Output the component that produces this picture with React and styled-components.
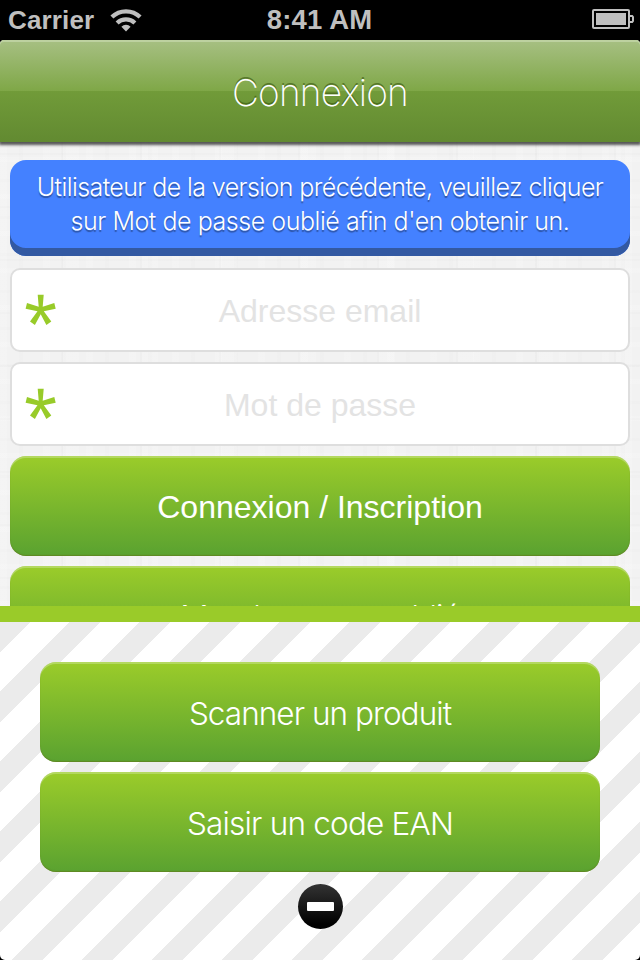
import React from "react";
import styled, { createGlobalStyle } from "styled-components";

const GlobalStyle = createGlobalStyle`
  html, body { margin: 0; padding: 0; background: #000; }
  * { box-sizing: border-box; }
`;

const Screen = styled.div`
  width: 640px;
  height: 960px;
  display: flex;
  flex-direction: column;
  background: #000;
  overflow: hidden;
  font-family: Inter, "Liberation Sans", sans-serif;
`;

const StatusBar = styled.div`
  flex: none;
  height: 40px;
  padding: 0 6px 0 8px;
  display: grid;
  grid-template-columns: 1fr auto 1fr;
  align-items: center;
  color: #bfbfbf;
  font: bold 26px/40px "Liberation Sans", sans-serif;
`;

const Carrier = styled.div`
  display: flex;
  align-items: center;
  gap: 16px;
  letter-spacing: 0.15px;
`;

const Clock = styled.div`
  font-size: 27.5px;
  line-height: 38px;
  letter-spacing: 0.15px;
  padding-right: 3px;
`;

const BatterySlot = styled.div`
  display: flex;
  justify-content: flex-end;
  margin-top: -2px;
`;

const Page = styled.main`
  flex: none;
  height: 566px;
  overflow: hidden;
  display: flex;
  flex-direction: column;
  border-radius: 4px 4px 0 0;
  background-color: #f2f2f2;
  background-image:
    repeating-linear-gradient(90deg, rgba(255,255,255,.14) 0 7px, transparent 7px 19px, rgba(0,0,0,.006) 19px 23px, transparent 23px 43px),
    repeating-linear-gradient(0deg, rgba(255,255,255,.14) 0 5px, transparent 5px 17px, rgba(0,0,0,.006) 17px 20px, transparent 20px 37px),
    repeating-linear-gradient(90deg, transparent 0 61px, rgba(0,0,0,.01) 61px 63px, rgba(255,255,255,.14) 63px 79px),
    repeating-linear-gradient(0deg, transparent 0 27px, rgba(0,0,0,.01) 27px 29px, transparent 29px 53px);
`;

const Header = styled.header`
  flex: none;
  height: 102px;
  display: flex;
  align-items: center;
  justify-content: center;
  padding-top: 4px;
  border-radius: 4px 4px 0 0;
  background: linear-gradient(#a7c083 0, #7fa747 50%, #719b39 50%, #628a31 100%);
  box-shadow: inset 0 2px #bdd1a0, 0 2px 3px 1px rgba(0,0,0,.65);
`;

const Title = styled.h1`
  margin: 0;
  color: #fff;
  font-size: 37px;
  font-weight: 200;
  line-height: 44px;
  letter-spacing: -0.8px;
  text-shadow: 0 -2px 0 rgba(55,85,15,.6);
`;

const Form = styled.form`
  display: flex;
  flex-direction: column;
  gap: 10px;
  padding: 18px 10px 0;
`;

const Notice = styled.p`
  margin: 0 0 2px;
  height: 96px;
  padding: 10px 0 0;
  border-radius: 16px;
  background: #4481ff;
  box-shadow: inset 0 -8px #3359a2;
  color: #fff;
  text-align: center;
  font-size: 25px;
  font-weight: 300;
  line-height: 34px;
  text-shadow: 0 2px 1px rgba(0,0,0,.35);
`;

const NoticeLine = styled.span`
  display: block;
  letter-spacing: ${(p) => p.$track}px;
`;

const Field = styled.label`
  height: 84px;
  display: grid;
  grid-template-columns: 32px 1fr 32px;
  align-items: center;
  padding: 0 12.5px;
  border: 2px solid #dedede;
  border-radius: 10px;
  background: #fff;
`;

const Placeholder = styled.span`
  color: #e3e3e3;
  text-align: center;
  font: 32px/40px "Liberation Sans", sans-serif;
  padding-top: 2px;
`;

const Button = styled.button`
  flex: none;
  width: 100%;
  height: 100px;
  padding: 2px 0 0;
  border: 0;
  border-radius: 16px;
  background: linear-gradient(#9bcc2a 0, #5aa230 100%);
  box-shadow: inset 0 2px rgba(255,255,255,.25), inset 0 -1px 1px rgba(100,110,20,.5);
  color: #fff;
  font-family: ${(p) => (p.$primary ? '"Liberation Sans"' : "Inter")}, sans-serif;
  font-size: ${(p) => (p.$primary ? 32 : 31.5)}px;
  font-weight: ${(p) => (p.$primary ? 400 : 300)};
  letter-spacing: ${(p) => p.$track || 0}px;
`;

const ResetButton = styled(Button)`
  padding-top: 0;
`;

const Drawer = styled.section`
  flex: none;
  height: 354px;
  display: flex;
  flex-direction: column;
  align-items: center;
  gap: 10px;
  padding: 40px 40px 0;
  border-top: 16px solid #9acb29;
  border-radius: 0 0 5px 5px;
  background: repeating-linear-gradient(135deg, #ebebeb 0 21.3px, #fff 21.8px 49.2px, #ebebeb 49.497px) padding-box;
`;

const Collapse = styled.button`
  width: 45px;
  height: 45px;
  margin: 2px 0 0 1px;
  padding: 0;
  border: 0;
  border-radius: 50%;
  display: flex;
  align-items: center;
  justify-content: center;
  background: linear-gradient(#333, #000 90%);
`;

const Minus = styled.span`
  width: 27px;
  height: 9px;
  border-radius: 1px;
  background: #fff;
`;

const Wifi = () => (
  <svg width="32" height="24" viewBox="0 0 32 24" fill="none" stroke="#bfbfbf" strokeWidth="4.2">
    <path d="M1.9 9.1a20 20 0 0 1 28.2 0" />
    <path d="M7.1 14.9a12.8 12.8 0 0 1 17.8 0" />
    <path d="M16 23.4l-4.6-4.7a6.4 6.4 0 0 1 9.2 0z" fill="#bfbfbf" stroke="none" />
  </svg>
);

const Battery = () => (
  <svg width="42" height="20" viewBox="0 0 42 20" fill="none" stroke="#bfbfbf" strokeWidth="2">
    <rect x="1" y="1" width="36" height="18" rx="1" />
    <rect x="4" y="4" width="30" height="12" fill="#bfbfbf" stroke="none" />
    <path d="M38 7h2.2l.8 1v4l-.8 1H38" />
  </svg>
);

const Required = () => (
  <svg width="32" height="32" viewBox="0 0 32 32" fill="#98cb29">
    <path d="M12.7.7h6l-1 12 11.6-3.6 1.4 5.6-11.9 2.6 7.5 10.1-4.9 3.5-5.7-10.6-5.8 10.6-4.9-3.5 7.5-10.1L.6 14.7l1.4-5.6 11.7 3.6z" />
  </svg>
);

export default function App() {
  return (
    <>
      <GlobalStyle />
      <Screen>
        <StatusBar>
          <Carrier>Carrier <Wifi /></Carrier>
          <Clock>8:41 AM</Clock>
          <BatterySlot><Battery /></BatterySlot>
        </StatusBar>
        <Page>
          <Header><Title>Connexion</Title></Header>
          <Form onSubmit={(e) => e.preventDefault()}>
            <Notice>
              <NoticeLine $track={-0.59}>Utilisateur de la version précédente, veuillez cliquer</NoticeLine>
              <NoticeLine $track={-0.45}>sur Mot de passe oublié afin d'en obtenir un.</NoticeLine>
            </Notice>
            <Field><Required /><Placeholder>Adresse email</Placeholder></Field>
            <Field><Required /><Placeholder>Mot de passe</Placeholder></Field>
            <Button $primary>Connexion / Inscription</Button>
            <ResetButton type="button" $track={-0.9}>Mot de passe oublié</ResetButton>
          </Form>
        </Page>
        <Drawer>
          <Button $track={-0.95}>Scanner un produit</Button>
          <Button $track={-0.8}>Saisir un code EAN</Button>
          <Collapse aria-label="Réduire"><Minus /></Collapse>
        </Drawer>
      </Screen>
    </>
  );
}
